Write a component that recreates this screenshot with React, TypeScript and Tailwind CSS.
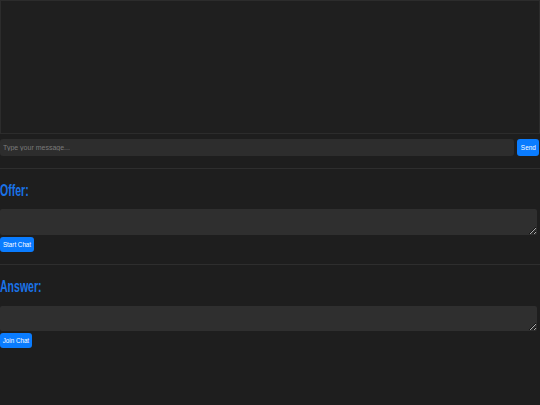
export default function App() {
  return (
    <div
      className="h-[405px] w-[540px] overflow-hidden bg-[#1e1e1e] text-white"
      style={{ fontFamily: '"Liberation Sans", Arial, sans-serif' }}
    >
      <div className="h-[134px] border border-[#2c2c2c] bg-[#1f1f1f]" />
      <div className="mt-[5px] flex items-center gap-[3px] pr-[1px]">
        <input
          type="text"
          placeholder="Type your message..."
          className="h-[17px] flex-1 rounded-[3px] bg-[#2d2d2d] px-[3px] text-[7px] text-white outline-none placeholder:text-[#7a7a7a]"
        />
        <button className="flex h-[17px] w-[22px] items-center justify-center rounded-[3px] bg-[#0a7cff] text-[8px] text-white">
          <span className="inline-block scale-x-[0.8]">Send</span>
        </button>
      </div>
      <hr className="mt-[12px] border-t border-[#2e2e2e]" />
      <h2 className="mt-[13px] text-[17px] font-bold leading-[18px] text-[#1a73e8]">
        <span className="inline-block origin-left scale-x-[0.62]">Offer:</span>
      </h2>
      <textarea className="mt-[9px] block h-[26px] w-[537px] rounded-[2px] bg-[#2f2f2f] outline-none" />
      <button className="mt-[2px] flex h-[15px] w-[34px] items-center justify-center rounded-[3px] bg-[#0a7cff] text-[8px] text-white">
        <span className="inline-block scale-x-[0.78] whitespace-nowrap">Start Chat</span>
      </button>
      <hr className="mt-[12px] border-t border-[#2e2e2e]" />
      <h2 className="mt-[13px] text-[17px] font-bold leading-[18px] text-[#1a73e8]">
        <span className="inline-block origin-left scale-x-[0.62]">Answer:</span>
      </h2>
      <textarea className="mt-[10px] block h-[25px] w-[537px] rounded-[2px] bg-[#2f2f2f] outline-none" />
      <button className="mt-[2px] flex h-[15px] w-[32px] items-center justify-center rounded-[3px] bg-[#0a7cff] text-[8px] text-white">
        <span className="inline-block scale-x-[0.78] whitespace-nowrap">Join Chat</span>
      </button>
    </div>
  );
}
